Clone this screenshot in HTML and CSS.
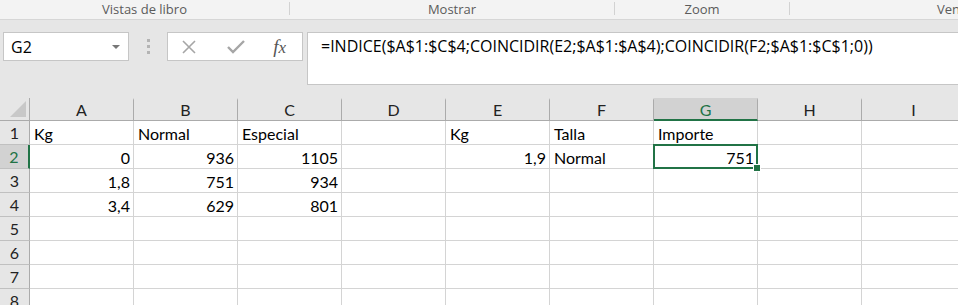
FILE: index.html
```html
<!DOCTYPE html>
<html lang="es">
<head>
  <meta charset="UTF-8" />
  <title>Libro1 - Excel</title>
  <link rel="stylesheet" href="styles.css">
</head>
<body>
  <div class="ribbon-groups">
    <div class="group g-vistas">Vistas de libro</div>
    <div class="group g-mostrar">Mostrar</div>
    <div class="group g-zoom">Zoom</div>
    <div class="group g-ventana">Ventana</div>
  </div>

  <div class="formula-area">
    <div class="name-box">
      <span>G2</span>
      <span class="caret"></span>
    </div>
    <div class="grip"><i></i><i></i><i></i></div>
    <div class="fx-box">
      <svg class="ico" width="18" height="18" viewBox="0 0 18 18">
        <path d="M3 3 L15 15 M15 3 L3 15" stroke="#a6a6a6" stroke-width="1.6" fill="none"/>
      </svg>
      <svg class="ico" width="20" height="18" viewBox="0 0 20 18">
        <path d="M2 9 L7 14 L18 3" stroke="#a6a6a6" stroke-width="2.4" fill="none"/>
      </svg>
      <span class="fx"><b>f</b>x</span>
    </div>
    <div class="formula">=INDICE($A$1:$C$4;COINCIDIR(E2;$A$1:$A$4);COINCIDIR(F2;$A$1:$C$1;0))</div>
  </div>

  <div class="sheet">
    <div class="corner"></div>
    <div class="col-h">A</div>
    <div class="col-h">B</div>
    <div class="col-h">C</div>
    <div class="col-h">D</div>
    <div class="col-h">E</div>
    <div class="col-h">F</div>
    <div class="col-h sel">G</div>
    <div class="col-h">H</div>
    <div class="col-h">I</div>

    <div class="row-h">1</div>
    <div class="cell">Kg</div>
    <div class="cell">Normal</div>
    <div class="cell">Especial</div>
    <div class="cell"></div>
    <div class="cell">Kg</div>
    <div class="cell">Talla</div>
    <div class="cell">Importe</div>
    <div class="cell"></div>
    <div class="cell"></div>

    <div class="row-h sel">2</div>
    <div class="cell num">0</div>
    <div class="cell num">936</div>
    <div class="cell num">1105</div>
    <div class="cell"></div>
    <div class="cell num">1,9</div>
    <div class="cell">Normal</div>
    <div class="cell num active">751</div>
    <div class="cell"></div>
    <div class="cell"></div>

    <div class="row-h">3</div>
    <div class="cell num">1,8</div>
    <div class="cell num">751</div>
    <div class="cell num">934</div>
    <div class="cell"></div>
    <div class="cell"></div>
    <div class="cell"></div>
    <div class="cell"></div>
    <div class="cell"></div>
    <div class="cell"></div>

    <div class="row-h">4</div>
    <div class="cell num">3,4</div>
    <div class="cell num">629</div>
    <div class="cell num">801</div>
    <div class="cell"></div>
    <div class="cell"></div>
    <div class="cell"></div>
    <div class="cell"></div>
    <div class="cell"></div>
    <div class="cell"></div>

    <div class="row-h">5</div>
    <div class="cell"></div><div class="cell"></div><div class="cell"></div>
    <div class="cell"></div><div class="cell"></div><div class="cell"></div>
    <div class="cell"></div><div class="cell"></div><div class="cell"></div>

    <div class="row-h">6</div>
    <div class="cell"></div><div class="cell"></div><div class="cell"></div>
    <div class="cell"></div><div class="cell"></div><div class="cell"></div>
    <div class="cell"></div><div class="cell"></div><div class="cell"></div>

    <div class="row-h">7</div>
    <div class="cell"></div><div class="cell"></div><div class="cell"></div>
    <div class="cell"></div><div class="cell"></div><div class="cell"></div>
    <div class="cell"></div><div class="cell"></div><div class="cell"></div>

    <div class="row-h">8</div>
    <div class="cell"></div><div class="cell"></div><div class="cell"></div>
    <div class="cell"></div><div class="cell"></div><div class="cell"></div>
    <div class="cell"></div><div class="cell"></div><div class="cell"></div>
  </div>
</body>
</html>
```

FILE: styles.css
```css
* {
  box-sizing: border-box;
}

body {
  margin: 0;
  width: 958px;
  height: 305px;
  overflow: hidden;
  background: #e6e6e6;
  font-family: 'Open Sans', 'Noto Sans', sans-serif;
  color: #000;
}

/* ribbon group captions */
.ribbon-groups {
  display: flex;
  height: 20px;
  background: #f3f3f3;
  border-bottom: 1px solid #d6d6d6;
  white-space: nowrap;
  overflow: hidden;
}

.group {
  flex: none;
  font-size: 13px;
  color: #5b5b5b;
  text-align: center;
  border-right: 1px solid #d2d2d2;
  margin: 2px 0 4px;
  line-height: 14px;
}

.g-vistas { width: 290px; }
.g-mostrar { width: 325px; }
.g-zoom { width: 175px; }
.g-ventana { width: 300px; border-right: none; padding-left: 147px; text-align: left; }

/* formula bar */
.formula-area {
  display: flex;
  align-items: flex-start;
  height: 78px;
  padding-top: 12px;
}

.name-box {
  display: flex;
  align-items: center;
  justify-content: space-between;
  width: 126px;
  height: 29px;
  margin-left: 3px;
  padding: 0 8px 0 7px;
  background: #fff;
  border: 1px solid #c6c6c6;
  font-size: 16px;
}

.caret {
  width: 0;
  height: 0;
  border-left: 4px solid transparent;
  border-right: 4px solid transparent;
  border-top: 4px solid #777;
}

.grip {
  display: flex;
  flex-direction: column;
  gap: 3px;
  width: 38px;
  align-items: center;
  padding-top: 7px;
}

.grip i {
  width: 3px;
  height: 3px;
  background: #b4b4b4;
}

.fx-box {
  display: flex;
  align-items: center;
  justify-content: space-between;
  width: 136px;
  height: 29px;
  padding: 0 16px 0 12px;
  background: #fff;
  border: 1px solid #c6c6c6;
}

.fx {
  font-family: 'Liberation Serif', serif;
  font-style: italic;
  font-size: 17px;
  color: #555;
}

.fx b {
  font-weight: normal;
  font-size: 19px;
}

.formula {
  flex: 1;
  height: 53px;
  margin-left: 4px;
  padding: 2px 0 0 13px;
  background: #fff;
  border: 1px solid #c6c6c6;
  border-right: none;
  font-size: 16px;
  white-space: nowrap;
}

/* grid */
.sheet {
  display: grid;
  grid-template-columns: 30px repeat(9, 104px);
  grid-template-rows: 23px repeat(8, 24px);
  background: #fff;
  font-family: 'Lato', 'Open Sans', sans-serif;
  font-size: 16px;
}

.corner {
  position: relative;
  background: #e6e6e6;
  border-right: 1px solid #ababab;
  border-bottom: 1px solid #ababab;
}

.corner::after {
  content: "";
  position: absolute;
  right: 3px;
  bottom: 3px;
  border-left: 16px solid transparent;
  border-bottom: 16px solid #c8c8c8;
}

.col-h {
  background: #e6e6e6;
  border-right: 1px solid #ababab;
  border-bottom: 1px solid #ababab;
  border-top: 2px solid #e6e6e6;
  text-align: center;
  line-height: 20px;
  color: #222;
}

.col-h.sel {
  background: #d2d2d2;
  border-top-color: #d2d2d2;
  border-bottom: 2px solid #217346;
  color: #217346;
}

.row-h {
  background: #e6e6e6;
  border-right: 1px solid #ababab;
  border-bottom: 1px solid #c0c0c0;
  text-align: center;
  line-height: 24px;
  color: #222;
}

.row-h.sel {
  background: #d2d2d2;
  border-right: 2px solid #217346;
  color: #217346;
}

.cell {
  position: relative;
  border-right: 1px solid #d4d4d4;
  border-bottom: 1px solid #d4d4d4;
  padding: 2px 4px 0;
  line-height: 22px;
  white-space: nowrap;
}

.cell.num {
  text-align: right;
  padding-right: 3px;
}

.cell.active::after {
  content: "";
  position: absolute;
  left: -1px;
  top: -1px;
  right: -1px;
  bottom: -1px;
  border: 2px solid #217346;
}

.cell.active::before {
  content: "";
  position: absolute;
  right: -4px;
  bottom: -4px;
  width: 6px;
  height: 6px;
  background: #217346;
  border: 1px solid #fff;
  z-index: 1;
}
```
